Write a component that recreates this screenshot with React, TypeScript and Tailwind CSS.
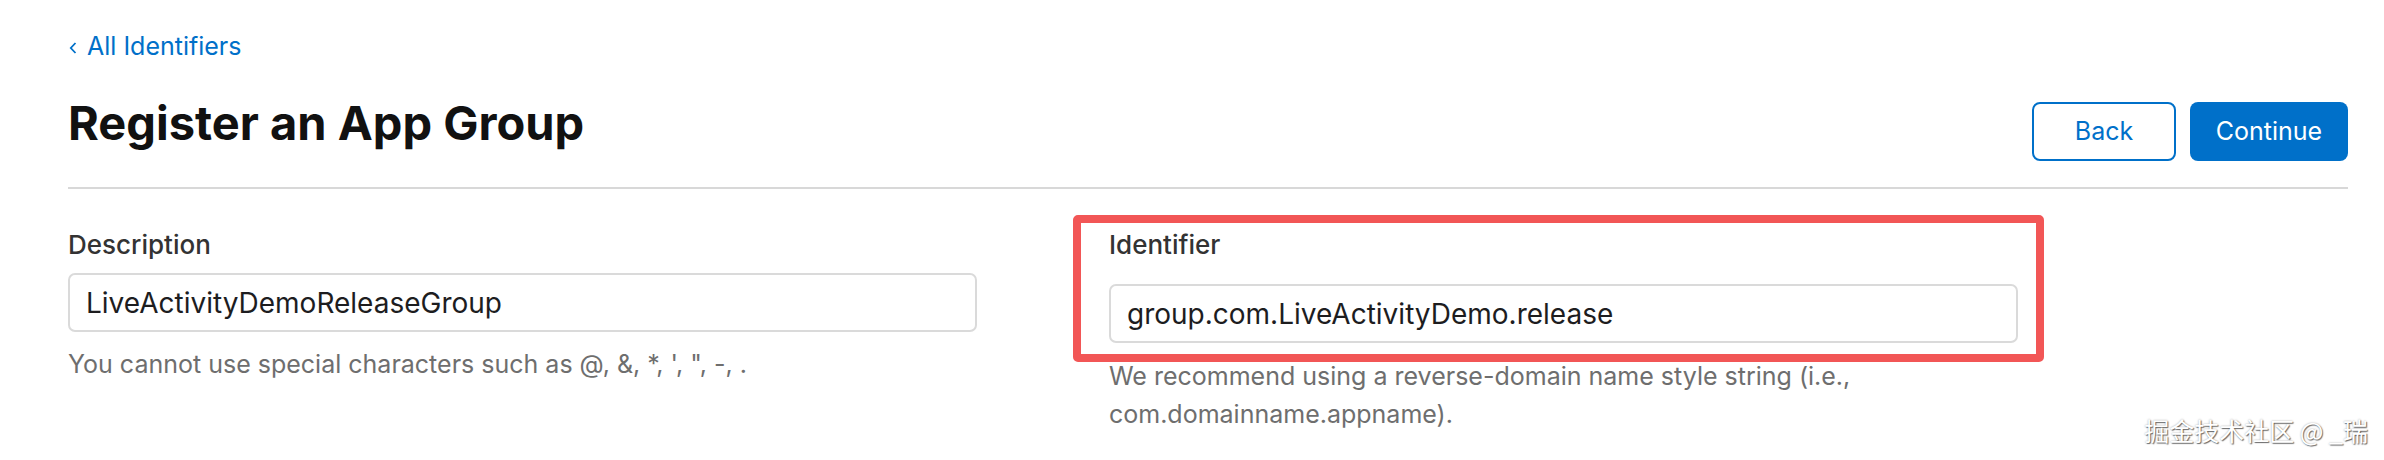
const inputClass =
  "flex h-[59px] w-full items-center rounded-[7px] border-2 border-[#dadada] bg-white px-[16px] text-[28px] text-[#1d1d1f]";

export default function App() {
  return (
    <div className="relative h-[460px] w-[2384px] overflow-hidden bg-white pl-[68px] pr-[36px] font-['Inter',sans-serif]">
      <a href="#" className="mt-[31px] flex h-[30px] w-fit items-center gap-[10px] text-[25px] leading-[30px] text-[#0070c9]">
        <svg width="8" height="12" viewBox="0 0 8 12" className="ml-[1px] mt-[4px]">
          <path d="M6.5 1 L1.8 6 L6.5 11" fill="none" stroke="#0070c9" strokeWidth="1.8" />
        </svg>
        <span>All Identifiers</span>
      </a>

      <div className="mt-[34px] flex items-start justify-between">
        <h1 className="text-[47px] font-bold leading-[56px] tracking-[0px] text-[#111111]">Register an App Group</h1>
        <div className="mt-[7px] flex gap-[14px]">
          <button className="h-[59px] w-[144px] rounded-[8px] border-2 border-[#0070c9] bg-white text-[25px] text-[#0070c9]">
            Back
          </button>
          <button className="h-[59px] w-[158px] rounded-[8px] bg-[#0070c9] text-[25px] text-white">Continue</button>
        </div>
      </div>

      <div className="mt-[26px] h-[2px] bg-[#d8d8d8]" />

      <div className="mt-[40px] flex gap-[132px]">
        <div className="w-[909px]">
          <label className="block text-[26px] font-medium leading-[32px] text-[#333333]">Description</label>
          <div className={`${inputClass} mt-[12px]`}>LiveActivityDemoReleaseGroup</div>
          <p className="mt-[13px] text-[25px] leading-[38px] text-[#6e6e6e]">
            You cannot use special characters such as @, &amp;, *, ', ", -, .
          </p>
        </div>

        <div className="relative w-[909px]">
          <label className="block text-[26px] font-medium leading-[32px] text-[#333333]">Identifier</label>
          <div className={`${inputClass} mt-[23px] h-[58px]`}>group.com.LiveActivityDemo.release</div>
          <p className="mt-[14px] w-[760px] text-[25px] leading-[38px] text-[#6e6e6e]">
            We recommend using a reverse-domain name style string (i.e., com.domainname.appname).
          </p>
          <div className="pointer-events-none absolute left-[-36px] top-[-14px] h-[147px] w-[971px] rounded-[5px] border-[8px] border-[#f25656]" />
        </div>
      </div>

      <div className="absolute bottom-[14px] right-[16px] font-['Noto_Sans_CJK_SC',sans-serif] text-[25px] leading-[32px] text-white [text-shadow:1px_1px_1px_rgba(0,0,0,0.55),0_0_2px_rgba(0,0,0,0.35)]">
        掘金技术社区 @ _瑞
      </div>
    </div>
  );
}
